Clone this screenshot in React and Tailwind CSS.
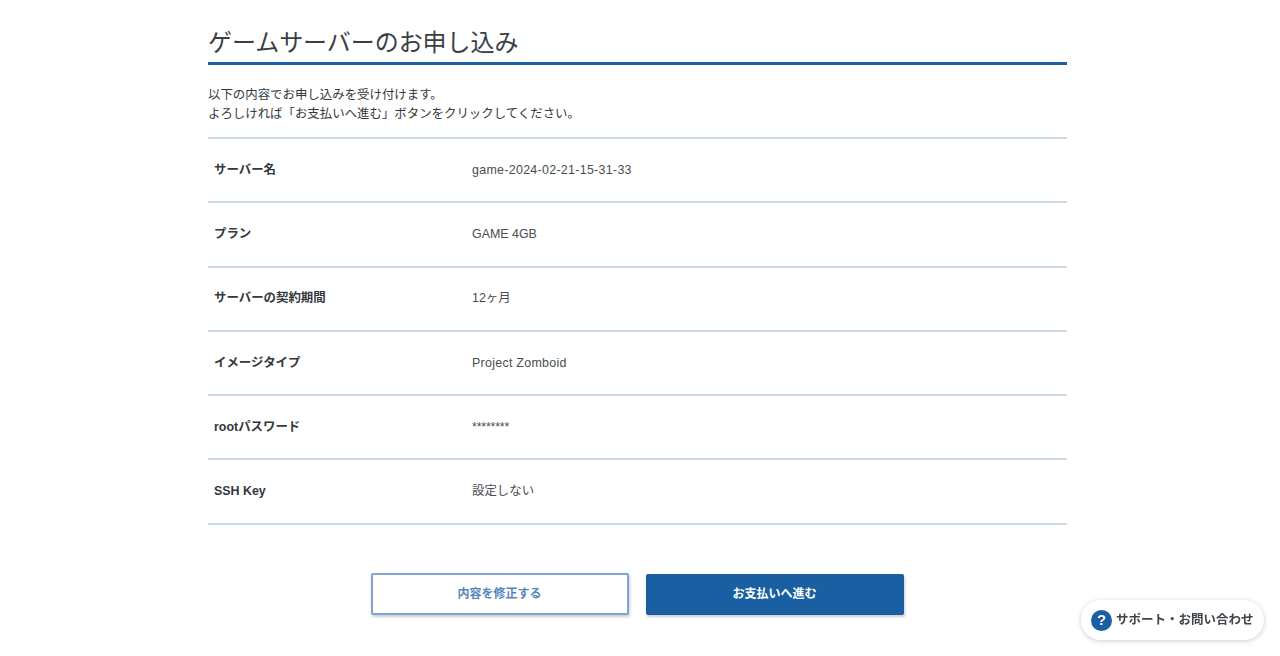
const font = { fontFamily: '"Liberation Sans", "Noto Sans CJK JP", sans-serif' }

const rows = [
  ['サーバー名', 'game-2024-02-21-15-31-33', 'tracking-[0.3px]'],
  ['プラン', 'GAME 4GB', ''],
  ['サーバーの契約期間', '12ヶ月', ''],
  ['イメージタイプ', 'Project Zomboid', 'tracking-[0.28px]'],
  ['rootパスワード', '********', 'tracking-[-0.2px]'],
  ['SSH Key', '設定しない', ''],
]

export default function App() {
  return (
    <div className="h-[656px] overflow-hidden bg-white text-[#33383d]" style={font}>
      <main className="w-[859px] ml-[208px]">
        <h1 className="h-[65px] pt-[25px] border-b-[3px] border-[#1a5fa2] text-[24px] leading-[35px] tracking-[-0.05px] text-[#3a3f44]">
          ゲームサーバーのお申し込み
        </h1>
        <p className="mt-[21px] text-[12.43px] leading-[19px]">
          以下の内容でお申し込みを受け付けます。<br />
          よろしければ「お支払いへ進む」ボタンをクリックしてください。
        </p>
        <div className="mt-[13px] border-t-2 border-[#cbdbeb]">
          {rows.map(([label, value, spacing]) => (
            <div key={label} className="h-[64.3px] flex items-center border-b-2 border-[#cbdbeb] text-[12.43px]">
              <div className="w-[264px] pl-[6px] font-bold">{label}</div>
              <div className={`text-[#484d52] ${spacing}`}>{value}</div>
            </div>
          ))}
        </div>
        <div className="mt-[48px] flex justify-center gap-[17px] pr-[1px]">
          <button className="w-[258px] h-[42px] bg-white border-2 border-[#7ea5d0] rounded-[2px] shadow-[1px_2px_3px_rgba(0,0,0,0.2)] text-[12px] font-bold text-[#5586bb]">
            内容を修正する
          </button>
          <button className="w-[258px] h-[41px] mt-[1px] bg-[#1a5fa2] rounded-[2px] shadow-[1px_2px_3px_rgba(0,0,0,0.2)] text-[12px] font-bold text-white">
            お支払いへ進む
          </button>
        </div>
      </main>
      <button className="fixed left-[1081px] top-[600px] w-[183px] h-[40px] flex items-center pl-[10px] gap-[4px] bg-white rounded-full shadow-[0_1px_5px_rgba(0,0,0,0.2)] text-[12.5px] font-bold text-[#3f444a]">
        <span className="w-[21px] h-[21px] rounded-full bg-[#1a5fa2] text-white flex items-center justify-center text-[15px] font-bold">?</span>
        サポート・お問い合わせ
      </button>
    </div>
  )
}
